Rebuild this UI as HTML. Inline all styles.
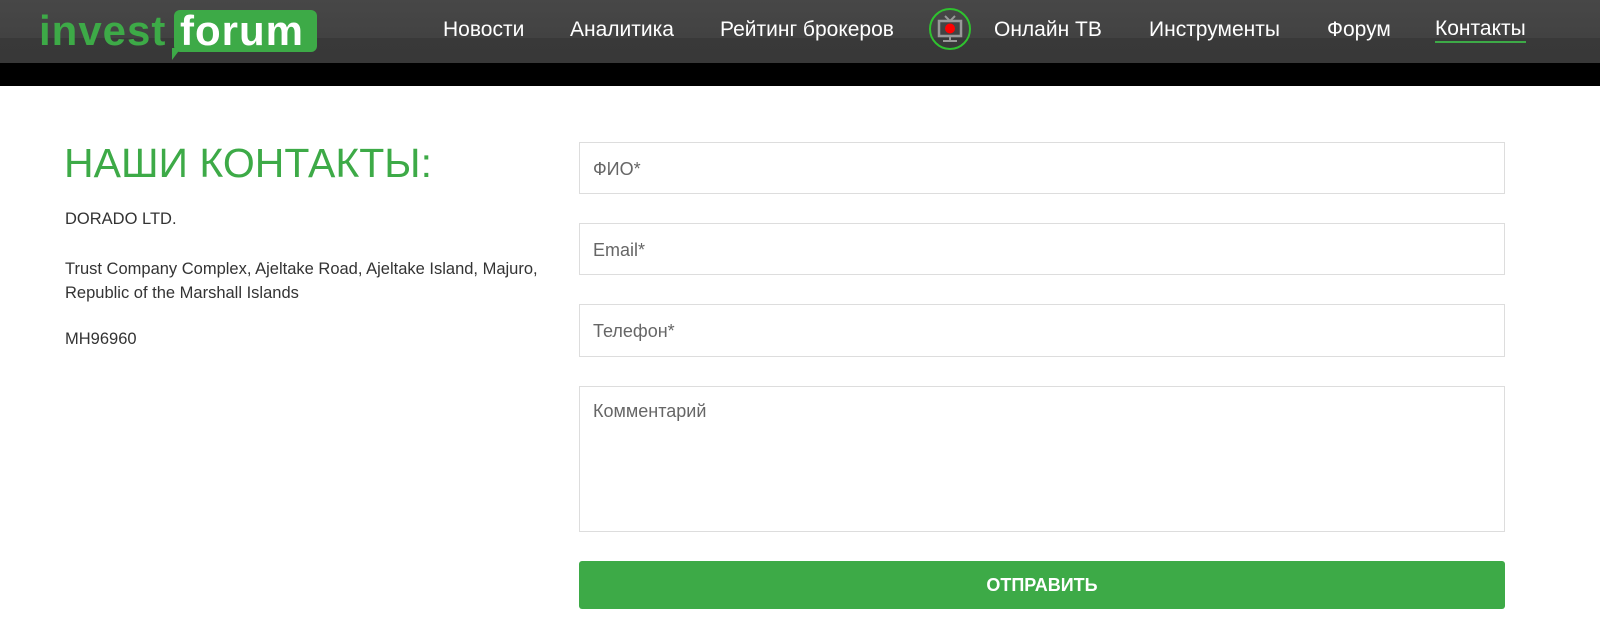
<!DOCTYPE html>
<html><head><meta charset="utf-8"><style>
body{margin:0;width:1600px;height:642px;background:#fff;font-family:"Liberation Sans",Arial,sans-serif;overflow:hidden;position:relative}
.hdr{position:absolute;left:0;top:0;width:1600px;height:63px;background:linear-gradient(#474747 0,#424242 38px,#393939 38px,#383838 63px)}
.blk{position:absolute;left:0;top:63px;width:1600px;height:23px;background:#000}
.logo1{position:absolute;left:39px;top:10px;font-size:42px;line-height:42px;font-weight:bold;color:#3daa47;letter-spacing:1px}
.logo2{position:absolute;left:174px;top:10px;width:143px;height:42px;background:#3daa47;border-radius:6px}
.logo2 span{position:absolute;left:6px;top:0;font-size:42px;line-height:42px;font-weight:bold;color:#fff;letter-spacing:1px}
.tail{position:absolute;left:172px;top:48px;width:0;height:0;border-left:9px solid #3daa47;border-bottom:12px solid transparent}
.nav{position:absolute;top:18px;font-size:21px;color:#fff}
.tv{position:absolute;left:929px;top:8px;width:42px;height:42px;border:2px solid #2fc22f;border-radius:50%;box-sizing:border-box}
.h1{position:absolute;left:64px;top:140px;font-size:41px;color:#3daa47}
.t{position:absolute;left:65px;font-size:16.5px;color:#333;line-height:24px}
.in{position:absolute;left:579px;width:926px;border:1px solid #ddd;box-sizing:border-box;font-size:18px;color:#666;padding-left:13px}
.btn{position:absolute;left:579px;top:561px;width:926px;height:48px;background:#3daa47;border-radius:3px;color:#fff;font-weight:bold;font-size:18px;text-align:center;line-height:48px}
</style></head><body>
<div class="hdr"></div><div class="blk"></div>
<div class="logo1">invest</div>
<div class="tail"></div>
<div class="logo2"><span>forum</span></div>
<div class="nav" style="left:443px">Новости</div>
<div class="nav" style="left:570px">Аналитика</div>
<div class="nav" style="left:720px">Рейтинг брокеров</div>
<div class="tv"><svg width="38" height="38" viewBox="0 0 38 38"><path d="M14 6l5 5 5-5" stroke="#999" stroke-width="2" fill="none"/><rect x="8" y="11" width="22" height="15" fill="none" stroke="#999" stroke-width="2.5"/><circle cx="19" cy="18.5" r="5" fill="#f00"/><path d="M19 26v4M12 31h14" stroke="#999" stroke-width="2"/></svg></div>
<div class="nav" style="left:994px">Онлайн ТВ</div>
<div class="nav" style="left:1149px">Инструменты</div>
<div class="nav" style="left:1327px">Форум</div>
<div class="nav" style="left:1435px;border-bottom:2px solid #3daa47;line-height:24px;top:17px">Контакты</div>
<div class="h1">НАШИ КОНТАКТЫ:</div>
<div class="t" style="top:207px">DORADO LTD.</div>
<div class="t" style="top:257px">Trust Company Complex, Ajeltake Road, Ajeltake Island, Majuro,<br>Republic of the Marshall Islands</div>
<div class="t" style="top:327px">MH96960</div>
<div class="in" style="top:142px;height:52px;line-height:52px">ФИО*</div>
<div class="in" style="top:223px;height:52px;line-height:52px">Email*</div>
<div class="in" style="top:304px;height:53px;line-height:53px">Телефон*</div>
<div class="in" style="top:386px;height:146px;padding-top:12px;line-height:24px">Комментарий</div>
<div class="btn">ОТПРАВИТЬ</div>
</body></html>
